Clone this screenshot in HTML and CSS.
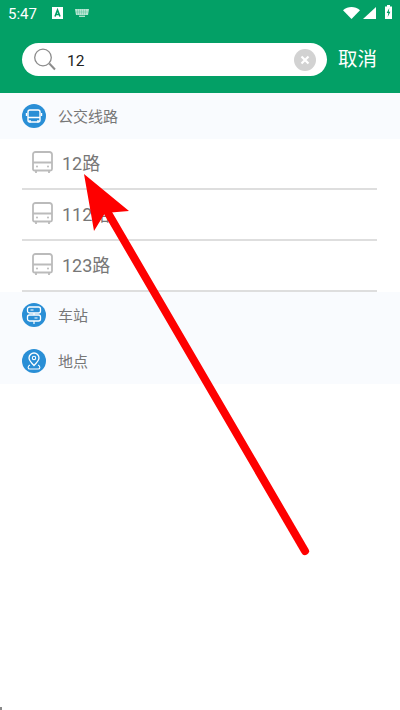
FILE: index.html
```html
<!DOCTYPE html>
<html lang="zh-CN">
<head>
    <meta charset="UTF-8">
    <title>搜索</title>
    <link rel="stylesheet" href="styles.css">
</head>
<body>
    <div class="header">
        <div class="status">
            <span class="time">5:47</span>
            <svg class="ic-a" width="11" height="12" viewBox="0 0 11 12"><rect width="11" height="12" fill="#fff"/><path d="M3 9.500 5.500 3 8 9.500M4 7.500h3" fill="none" stroke="#03a066" stroke-width="1.600"/></svg>
            <svg class="ic-kb" width="14" height="8" viewBox="0 0 14 8"><path d="M0 0h14l-1 6H1z" fill="#b9e6d3"/><path d="M2.500 .5v5M4.500 .5v5M6.500 .5v5M8.500 .5v5M10.500 .5v5M1 3h12" stroke="#5cc29c" stroke-width=".5"/><path d="M4 7.300h6" stroke="#b9e6d3" stroke-width="1.300"/></svg>
            <span class="status-right">
                <svg class="ic-wifi" width="17" height="12" viewBox="0 0 17 12"><path d="M0 3.300C5-1 12-1 17 3.300L8.500 12z" fill="#fff"/></svg>
                <svg class="ic-signal" width="13" height="12" viewBox="0 0 13 12"><path d="M13 0V12H0z" fill="#fff"/></svg>
                <svg width="7" height="14" viewBox="0 0 7 14"><path d="M2 0h3v1.500h2V14H0V1.500h2z" fill="#fff"/><path d="M4.300 3 1.700 8h1.600L2.700 12l2.700-5.200H3.800z" fill="#03a066"/></svg>
            </span>
        </div>
        <div class="search-row">
            <div class="search-box">
                <svg class="ic-search" width="23" height="25" viewBox="0 0 23 25"><circle cx="10" cy="10.500" r="8.300" fill="none" stroke="#8c8c8c" stroke-width="1.300"/><path d="M16.300 16.500 22 22.500" stroke="#8c8c8c" stroke-width="2"/></svg>
                <span class="search-text">12</span>
                <span class="clear">
                    <svg width="10" height="10" viewBox="0 0 10 10"><path d="M1.500 1.500 8.500 8.500M8.500 1.500 1.500 8.500" stroke="#fff" stroke-width="2.200"/></svg>
                </span>
            </div>
            <span class="cancel">取消</span>
        </div>
    </div>

    <div class="section">
        <span class="sec-icon">
            <svg width="18" height="18" viewBox="0 0 18 18"><rect x="3" y="3" width="12" height="12" rx="2" fill="none" stroke="#fff" stroke-width="1.400"/><path d="M3 10.500h12M1.500 6v3M16.500 6v3M5 13v2.500M13 13v2.500" stroke="#fff" stroke-width="1.400" fill="none"/></svg>
        </span>
        <span class="sec-label">公交线路</span>
    </div>
    <div class="route">
        <svg class="ic-bus" width="21" height="22" viewBox="0 0 21 22"><use href="#bus"/></svg>
        <span>12路</span>
    </div>
    <div class="route">
        <svg class="ic-bus" width="21" height="22" viewBox="0 0 21 22"><use href="#bus"/></svg>
        <span>112路</span>
    </div>
    <div class="route">
        <svg class="ic-bus" width="21" height="22" viewBox="0 0 21 22"><use href="#bus"/></svg>
        <span>123路</span>
    </div>
    <div class="section">
        <span class="sec-icon">
            <svg width="18" height="20" viewBox="0 0 18 20"><rect x="2.500" y="2" width="13" height="6" rx="2" fill="none" stroke="#fff" stroke-width="1.300"/><rect x="2.500" y="10" width="13" height="6" rx="2" fill="none" stroke="#fff" stroke-width="1.300"/><path d="M9 8v2M9 16v3M5.500 5h3M9.500 13h3" stroke="#fff" stroke-width="1.200"/></svg>
        </span>
        <span class="sec-label">车站</span>
    </div>
    <div class="section">
        <span class="sec-icon">
            <svg width="18" height="20" viewBox="0 0 18 20"><path d="M9 14.500C6 11.500 4 9.500 4 7a5 5 0 0 1 10 0C14 9.500 12 11.500 9 14.500z" fill="none" stroke="#fff" stroke-width="1.300"/><circle cx="9" cy="7" r="1.700" fill="none" stroke="#fff" stroke-width="1.100"/><path d="M5 14C2.500 15 2.500 18 5 18h8c2.500 0 2.500-3 0-4" fill="none" stroke="#fff" stroke-width="1.100"/></svg>
        </span>
        <span class="sec-label">地点</span>
    </div>

    <svg class="defs" width="0" height="0">
        <symbol id="bus" viewBox="0 0 21 22">
            <path d="M3.500 1h14A2.500 2.500 0 0 1 20 3.500V18a1.500 1.500 0 0 1-1.500 1.500h-16A1.500 1.500 0 0 1 1 18V3.500A2.500 2.500 0 0 1 3.500 1z" fill="none" stroke="#bbb" stroke-width="1.800"/>
            <path d="M1 11.500h19M4 19.500v2.500M17 19.500v2.500" stroke="#bbb" stroke-width="1.800" fill="none"/>
            <circle cx="5" cy="15.500" r="1" fill="#bbb"/><circle cx="16" cy="15.500" r="1" fill="#bbb"/>
        </symbol>
    </svg>

    <span class="corner-mark"></span>

    <!-- red annotation arrow drawn over the list -->
    <svg class="arrow" width="400" height="710" viewBox="0 0 400 710">
        <path d="M305 551 108 213" stroke="#fe0000" stroke-width="8" stroke-linecap="round" fill="none"/>
        <path d="M84 174 129 211 105 213 94 231z" fill="#fe0000"/>
    </svg>
</body>
</html>
```

FILE: styles.css
```css
* {
    box-sizing: border-box;
}

html, body {
    margin: 0;
    height: 100%;
}

body {
    position: relative;
    overflow: hidden;
    background-color: #fff;
    font-family: Roboto, "Noto Sans CJK SC", sans-serif;
}

.header {
    height: 93px;
    background-color: #03a066;
    color: #fff;
}

.status {
    height: 43px;
    padding: 4px 8px 0 8px;
    display: flex;
    align-items: flex-start;
}

.time {
    font-size: 15px;
    line-height: 20px;
    width: 36px;
}

.ic-a {
    margin: 3px 0 0 8px;
}

.ic-kb {
    margin: 5px 0 0 12px;
}

.status-right {
    margin-left: auto;
    display: flex;
    align-items: flex-end;
    height: 15px;
    padding-top: 1px;
}

.ic-signal {
    margin: 0 9px 0 3px;
}

.search-row {
    display: flex;
    align-items: center;
    padding-left: 22px;
}

.search-box {
    width: 305px;
    height: 33px;
    border-radius: 17px;
    background-color: #fff;
    display: flex;
    align-items: center;
    padding: 0 11px;
}

.search-text {
    margin: 2px 0 0 11px;
    font-size: 15.500px;
    color: #222;
}

.clear {
    margin-left: auto;
    width: 22px;
    height: 22px;
    border-radius: 50%;
    background-color: #d2d2d2;
    display: flex;
    align-items: center;
    justify-content: center;
}

.cancel {
    margin-left: 11px;
    font-size: 19.500px;
    line-height: 33px;
}

.section {
    height: 46px;
    background-color: #f9fbfe;
    display: flex;
    align-items: center;
    padding-left: 22px;
}

.sec-icon {
    width: 24px;
    height: 24px;
    border-radius: 50%;
    background-color: #2a8fd6;
    display: flex;
    align-items: center;
    justify-content: center;
}

.sec-label {
    margin: 0 0 2px 12px;
    font-size: 15px;
    color: #777;
}

.route {
    height: 51px;
    margin: 0 23px 0 22px;
    border-bottom: 2px solid #dedede;
    display: flex;
    align-items: center;
    padding: 0 0 3px 10px;
    font-size: 18px;
    color: #777;
}

.ic-bus {
    margin-right: 9px;
}

.defs {
    position: absolute;
}

.corner-mark {
    position: absolute;
    left: 0;
    bottom: 0;
    width: 2px;
    height: 3px;
    background-color: #888;
}

.arrow {
    position: absolute;
    left: 0;
    top: 0;
}
```
